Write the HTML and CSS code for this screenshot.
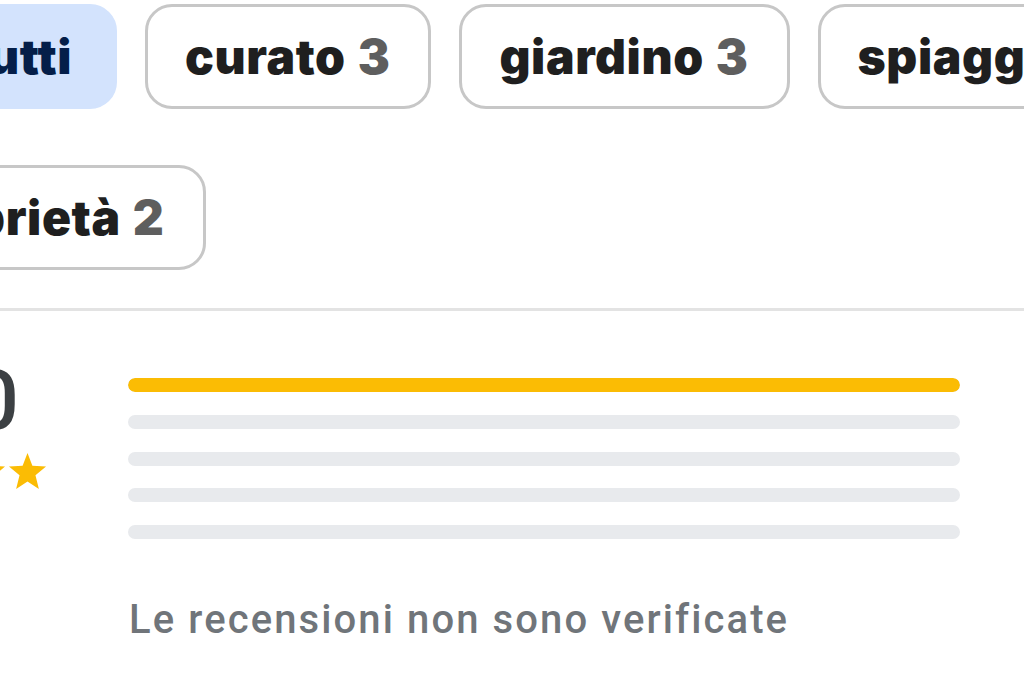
FILE: index.html
```html
<!DOCTYPE html>
<html lang="it">
<head>
<meta charset="utf-8">
<title>Recensioni</title>
<link rel="stylesheet" href="styles.css">
</head>
<body>
<div class="page">
  <section class="chips">
    <div class="chip-row row-one">
      <button class="chip chip-selected">Tutti</button>
      <button class="chip">curato <span class="count">3</span></button>
      <button class="chip">giardino <span class="count">3</span></button>
      <button class="chip">spiaggia <span class="count">2</span></button>
    </div>
    <div class="chip-row row-two">
      <button class="chip">proprietà <span class="count">2</span></button>
    </div>
  </section>

  <hr class="divider">

  <section class="rating">
    <div class="rating-summary">
      <div class="rating-number">5,0</div>
      <div class="stars">
        <svg class="star" viewBox="0 0 24 24"><polygon points="12,0.6 15,8.4 23.4,8.9 16.9,14.3 19,22.8 12,18.2 5,22.8 7.1,14.3 0.6,8.9 9,8.4"/></svg>
        <svg class="star" viewBox="0 0 24 24"><polygon points="12,0.6 15,8.4 23.4,8.9 16.9,14.3 19,22.8 12,18.2 5,22.8 7.1,14.3 0.6,8.9 9,8.4"/></svg>
        <svg class="star" viewBox="0 0 24 24"><polygon points="12,0.6 15,8.4 23.4,8.9 16.9,14.3 19,22.8 12,18.2 5,22.8 7.1,14.3 0.6,8.9 9,8.4"/></svg>
        <svg class="star" viewBox="0 0 24 24"><polygon points="12,0.6 15,8.4 23.4,8.9 16.9,14.3 19,22.8 12,18.2 5,22.8 7.1,14.3 0.6,8.9 9,8.4"/></svg>
        <svg class="star" viewBox="0 0 24 24"><polygon points="12,0.6 15,8.4 23.4,8.9 16.9,14.3 19,22.8 12,18.2 5,22.8 7.1,14.3 0.6,8.9 9,8.4"/></svg>
      </div>
    </div>
    <div class="bars">
      <div class="bar"><div class="bar-fill" style="width:100%"></div></div>
      <div class="bar"><div class="bar-fill" style="width:0%"></div></div>
      <div class="bar"><div class="bar-fill" style="width:0%"></div></div>
      <div class="bar"><div class="bar-fill" style="width:0%"></div></div>
      <div class="bar"><div class="bar-fill" style="width:0%"></div></div>
    </div>
  </section>

  <p class="note">Le recensioni non sono verificate</p>
</div>
</body>
</html>
```

FILE: styles.css
```css
* {
  box-sizing: border-box;
}

html, body {
  margin: 0;
  padding: 0;
  background: #ffffff;
}

body {
  width: 1024px;
  height: 683px;
  overflow: hidden;
  font-family: Inter, "Noto Sans", sans-serif;
}

.page {
  width: 1024px;
}

.chips {
  padding-top: 4px;
}

.chip-row {
  display: flex;
  gap: 28px;
  white-space: nowrap;
}

.row-one {
  margin-left: -82px;
}

.row-two {
  margin-top: 56px;
  margin-left: -148px;
}

.chip {
  flex: none;
  display: flex;
  align-items: center;
  height: 105px;
  padding: 0 38px 0 37px;
  border: 3px solid #c7c7c7;
  border-radius: 27px;
  background: #ffffff;
  font-family: Inter, "Noto Sans", sans-serif;
  font-size: 48px;
  font-weight: 900;
  color: #1f1f1f;
  letter-spacing: 0.6px;
}

.chip .count {
  margin-left: 0.25em;
  color: #5e5e5e;
}

.chip-selected {
  background: #d3e3fd;
  border-color: #d3e3fd;
  color: #041e49;
  padding-right: 42px;
}

.divider {
  margin: 38px 0 0;
  border: 0;
  height: 3px;
  background: #e3e3e3;
}

.rating {
  display: flex;
  align-items: flex-start;
  padding-top: 41px;
  margin-left: -175px;
}

.rating-summary {
  flex: none;
  display: flex;
  flex-direction: column;
  align-items: flex-end;
  width: 222px;
}

.rating-number {
  font-family: Roboto, "Liberation Sans", sans-serif;
  font-size: 84px;
  font-weight: 500;
  line-height: 98px;
  color: #3c4043;
  margin-right: 28px;
}

.stars {
  display: flex;
  gap: 2px;
  margin-top: 2px;
}

.star {
  width: 39px;
  height: 39px;
  fill: #fbbc04;
}

.bars {
  flex: none;
  width: 832px;
  margin-left: 81px;
  margin-top: 26px;
  display: flex;
  flex-direction: column;
  gap: 22.75px;
}

.bar {
  height: 14px;
  border-radius: 7px;
  background: #e8eaed;
  overflow: hidden;
}

.bar-fill {
  height: 100%;
  border-radius: 7px;
  background: #fbbc04;
}

.note {
  margin: 57px 0 0 129px;
  font-family: Roboto, "Liberation Sans", sans-serif;
  font-size: 40px;
  font-weight: 500;
  letter-spacing: 2.1px;
  color: #70757a;
}
```
